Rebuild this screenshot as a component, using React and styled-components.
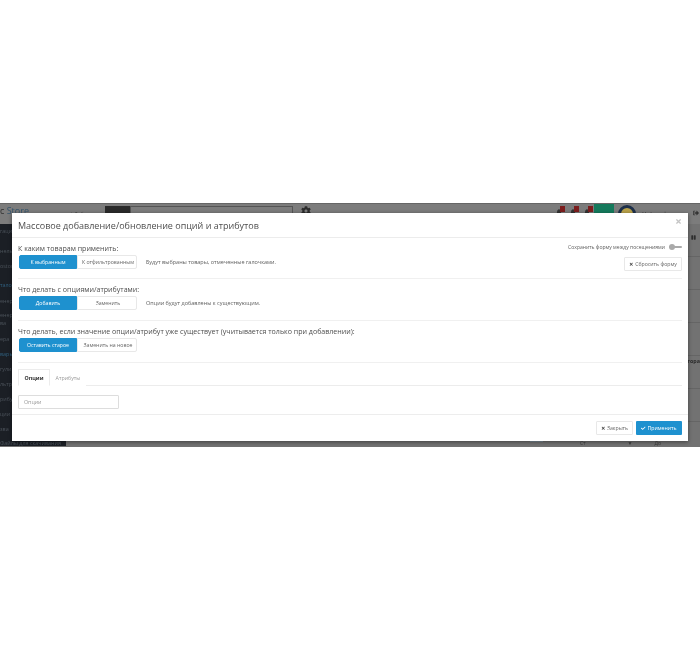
import React from "react";
import styled, { createGlobalStyle } from "styled-components";
import { FaTimes, FaCheck, FaPause, FaCog, FaSignOutAlt, FaBell } from "react-icons/fa";

const Global = createGlobalStyle`
  html, body { margin: 0; padding: 0; background: #fff; }
  body { font-family: "Open Sans", "Liberation Sans", sans-serif; color: #666; }
  * { box-sizing: border-box; }
`;

const Page = styled.div`
  width: 700px;
  height: 650px;
  padding-top: 203px;
  overflow: hidden;
`;

const Stage = styled.div`
  position: relative;
  height: 244px;
  background: #727272;
  overflow: hidden;
  filter: blur(0.42px);
`;

const BackHeader = styled.div`
  height: 21px;
  display: flex;
  align-items: flex-start;
  padding-top: 2px;
  background: #7c7c7c;
  border-top: 1px solid #666;
`;

const Brand = styled.div`
  width: 70px;
  font-size: 9px;
  line-height: 10px;
  color: #2f2f2f;
  span { color: #34546c; }
`;

const BackLink = styled.div`
  width: 35px;
  padding-top: 5px;
  font-size: 5px;
  line-height: 6px;
  color: #3d3d3d;
`;

const SearchAddon = styled.div`
  width: 25px;
  height: 12px;
  background: #2a2a2a;
`;

const SearchBox = styled.div`
  width: 163px;
  height: 10px;
  border: 1px solid #555;
  background: #7c7c7c;
`;

const GearSlot = styled.div`
  margin-left: 8px;
  display: flex;
  color: #2c2c2c;
  font-size: 10px;
`;

const HeaderRight = styled.div`
  margin-left: auto;
  display: flex;
  align-items: flex-start;
  width: 144px;
`;

const BellSlot = styled.div`
  position: relative;
  width: ${(p) => p.$w}px;
  height: 10px;
  padding: 3px 0 0 0;
  display: flex;
  color: #333;
  font-size: 6px;
  &::after {
    content: "";
    position: absolute;
    left: 4px;
    top: 0;
    width: 5px;
    height: 6px;
    background: #7c1d1d;
  }
`;

const GreenTile = styled.div`
  width: 20px;
  height: 12px;
  margin-top: -2px;
  background: #157a5c;
`;

const Avatar = styled.div`
  width: 18px;
  height: 18px;
  margin: -1px 6px 0 4px;
  border-radius: 50%;
  border: 3px solid #1d2f4a;
  background: #b9a24a;
`;

const UserName = styled.div`
  width: 38px;
  padding-top: 5px;
  font-size: 5px;
  line-height: 6px;
  color: #454545;
  white-space: nowrap;
`;

const ExitSlot = styled.div`
  margin-left: 13px;
  padding-top: 4px;
  display: flex;
  color: #333;
  font-size: 6px;
`;

const BackBody = styled.div`
  display: flex;
  height: 222px;
`;

const Sidebar = styled.div`
  width: 66px;
  background: #1b1f25;
`;

const SideItem = styled.div`
  height: ${(p) => p.$h}px;
  display: flex;
  align-items: flex-end;
  font-size: 5.4px;
  line-height: 6px;
  color: ${(p) => (p.$on ? "#2f5f7e" : "#4b525a")};
  white-space: nowrap;
`;

const BackTable = styled.div`
  flex: 1;
  display: flex;
  flex-direction: column;
  background: repeating-linear-gradient(180deg, transparent 0 32px, #656565 32px 33px), #727272;
`;

const PauseRow = styled.div`
  height: 26px;
  display: flex;
  align-items: center;
  justify-content: flex-end;
  padding-right: 4px;
  color: #2e2e2e;
  font-size: 5px;
`;

const GridCells = styled.div`
  flex: 1;
  display: flex;
  justify-content: flex-end;
  align-items: flex-start;
  padding-top: 107px;
  font-size: 5.4px;
  font-weight: 700;
  color: #2b2b2b;
`;

const BottomStrip = styled.div`
  flex: none;
  height: 6px;
  display: flex;
  font-size: 5px;
  line-height: 6px;
  color: #3a3a3a;
`;

const StripBlue = styled.div`
  width: 13px;
  height: 2px;
  margin-left: 464px;
  background: #7d8b96;
`;

const StripLabel = styled.div`
  margin-left: ${(p) => p.$ml}px;
`;

const Modal = styled.div`
  position: absolute;
  left: 12px;
  top: 10px;
  width: 676px;
  height: 228px;
  background: #fff;
  box-shadow: 0 1px 4px rgba(0, 0, 0, 0.45);
  display: flex;
  flex-direction: column;
`;

const ModalHeader = styled.div`
  position: relative;
  height: 25px;
  flex: none;
  padding: 5px 6px 0;
  border-bottom: 1px solid #ececec;
`;

const Title = styled.h4`
  margin: 0;
  font-size: 9px;
  line-height: 15px;
  font-weight: 400;
  color: #4d4d4d;
`;

const CloseMark = styled.span`
  position: absolute;
  right: 6px;
  top: 5px;
  display: flex;
  font-size: 7px;
  color: #c4c4c4;
`;

const ModalBody = styled.div`
  flex: 1;
  padding: 0 6px;
`;

const Section = styled.div`
  height: ${(p) => p.$h}px;
  display: flex;
  justify-content: space-between;
  border-bottom: 1px solid #f0f0f0;
`;

const Field = styled.div`
  padding-top: 5px;
`;

const Label = styled.div`
  font-size: 7.07px;
  line-height: 10px;
  color: #4d4d4d;
`;

const ControlRow = styled.div`
  display: flex;
  align-items: center;
  margin-top: 2px;
  margin-left: 1px;
`;

const Segmented = styled.div`
  display: flex;
  width: 118px;
  height: 14px;
`;

const Seg = styled.div`
  display: flex;
  align-items: center;
  justify-content: center;
  width: ${(p) => (p.$on ? 58 : 60)}px;
  padding-left: ${(p) => (p.$on ? 0 : 2)}px;
  font-size: 5.2px;
  white-space: nowrap;
  border: 1px solid ${(p) => (p.$on ? "#1e91cf" : "#e8e8e8")};
  border-radius: ${(p) => (p.$on ? "2px 0 0 2px" : "0 2px 2px 0")};
  background: ${(p) => (p.$on ? "#1e91cf" : "#fff")};
  color: ${(p) => (p.$on ? "#fff" : "#666")};
`;

const Hint = styled.span`
  margin-left: 9px;
  font-size: 5.5px;
  color: #5c5c5c;
`;

const Side = styled.div`
  display: flex;
  flex-direction: column;
  align-items: flex-end;
  padding-top: 5px;
`;

const SaveRow = styled.div`
  display: flex;
  align-items: center;
  gap: 4px;
  height: 8px;
  font-size: 5.05px;
  color: #5c5c5c;
`;

const Toggle = styled.div`
  position: relative;
  width: 13px;
  height: 2px;
  background: #aaa;
  border-radius: 1px;
  &::before {
    content: "";
    position: absolute;
    left: 0;
    top: -2px;
    width: 6px;
    height: 6px;
    border-radius: 50%;
    background: #aaa;
  }
`;

const OutlineButton = styled.div`
  display: flex;
  align-items: center;
  justify-content: center;
  gap: 1.5px;
  height: 14px;
  width: ${(p) => p.$w}px;
  border: 1px solid #e8e8e8;
  border-radius: 1px;
  background: #fff;
  font-size: 5.2px;
  color: #666;
  svg { color: #444; font-size: 4.5px; }
`;

const ResetButton = styled(OutlineButton)`
  margin-top: 6px;
`;

const Tabs = styled.div`
  display: flex;
  height: 23px;
  border-bottom: 1px solid #ececec;
`;

const Tab = styled.div`
  display: flex;
  align-items: center;
  justify-content: center;
  width: ${(p) => p.$w}px;
  height: 17px;
  margin-top: 6px;
  font-size: 5.3px;
  font-weight: ${(p) => (p.$on ? 700 : 400)};
  color: ${(p) => (p.$on ? "#333" : "#999")};
  background: #fff;
  border: 1px solid ${(p) => (p.$on ? "#ececec" : "transparent")};
  border-bottom-color: ${(p) => (p.$on ? "#fff" : "transparent")};
`;

const OptionInput = styled.input`
  display: block;
  width: 101px;
  height: 14px;
  margin-top: 9px;
  padding: 0 5px;
  border: 1px solid #ddd;
  border-radius: 1px;
  font: 400 5.3px "Open Sans", sans-serif;
  &::placeholder { color: #999; opacity: 1; }
`;

const ModalFooter = styled.div`
  flex: none;
  height: 27px;
  display: flex;
  justify-content: flex-end;
  gap: 3px;
  padding: 6px 6px 0;
  border-top: 1px solid #ededed;
`;

const ApplyButton = styled.div`
  display: flex;
  align-items: center;
  justify-content: center;
  gap: 1.5px;
  width: 46px;
  height: 14px;
  background: #1e91cf;
  border-radius: 1px;
  font-size: 5.2px;
  color: #fff;
  svg { font-size: 4.5px; }
`;

const sideItems = [
  { t: "гации", h: 10 },
  { t: "нель", h: 20 },
  { t: "oston", h: 15 },
  { t: "талог", h: 19, on: true },
  { t: "енеро", h: 16 },
  { t: "енера", h: 14 },
  { t: "ва", h: 8 },
  { t: "ера", h: 16 },
  { t: "вары", h: 15, on: true },
  { t: "гулир", h: 15 },
  { t: "льтр", h: 15 },
  { t: "рибут", h: 15 },
  { t: "ции", h: 15 },
  { t: "зва", h: 15 },
  { t: "Файлы для скачивания", h: 14 },
];

export default function App() {
  return (
    <Page>
      <Global />
      <Stage>
        <BackHeader>
          <Brand>c <span>Store</span></Brand>
          <BackLink>+ Добавить</BackLink>
          <SearchAddon />
          <SearchBox />
          <GearSlot><FaCog /></GearSlot>
          <HeaderRight>
            <BellSlot $w={14}><FaBell /></BellSlot>
            <BellSlot $w={14}><FaBell /></BellSlot>
            <BellSlot $w={10}><FaBell /></BellSlot>
            <GreenTile />
            <Avatar />
            <UserName>Мой профиль ▾</UserName>
            <ExitSlot><FaSignOutAlt /></ExitSlot>
          </HeaderRight>
        </BackHeader>
        <BackBody>
          <Sidebar>
            {sideItems.map((item) => (
              <SideItem key={item.t} $h={item.h} $on={item.on}>{item.t}</SideItem>
            ))}
          </Sidebar>
          <BackTable>
            <PauseRow><FaPause /></PauseRow>
            <GridCells>гора</GridCells>
            <BottomStrip>
              <StripBlue />
              <StripLabel $ml={37}>Ст</StripLabel>
              <StripLabel $ml={42}>▼</StripLabel>
              <StripLabel $ml={22}>До</StripLabel>
            </BottomStrip>
          </BackTable>
        </BackBody>
        <Modal>
          <ModalHeader>
            <Title>Массовое добавление/обновление опций и атрибутов</Title>
            <CloseMark><FaTimes /></CloseMark>
          </ModalHeader>
          <ModalBody>
            <Section $h={41}>
              <Field>
                <Label>К каким товарам применить:</Label>
                <ControlRow>
                  <Segmented>
                    <Seg $on>К выбранным</Seg>
                    <Seg>К отфильтрованным</Seg>
                  </Segmented>
                  <Hint>Будут выбраны товары, отмеченные галочками.</Hint>
                </ControlRow>
              </Field>
              <Side>
                <SaveRow>
                  Сохранить форму между посещениями
                  <Toggle />
                </SaveRow>
                <ResetButton $w={58}>
                  <FaTimes /> Сбросить форму
                </ResetButton>
              </Side>
            </Section>
            <Section $h={42}>
              <Field>
                <Label>Что делать с опциями/атрибутами:</Label>
                <ControlRow>
                  <Segmented>
                    <Seg $on>Добавить</Seg>
                    <Seg>Заменить</Seg>
                  </Segmented>
                  <Hint>Опции будут добавлены к существующим.</Hint>
                </ControlRow>
              </Field>
            </Section>
            <Section $h={42}>
              <Field>
                <Label>Что делать, если значение опции/атрибут уже существует (учитывается только при добавлении):</Label>
                <ControlRow>
                  <Segmented>
                    <Seg $on>Оставить старое</Seg>
                    <Seg>Заменить на новое</Seg>
                  </Segmented>
                </ControlRow>
              </Field>
            </Section>
            <Tabs>
              <Tab $on $w={32}>Опции</Tab>
              <Tab $w={36}>Атрибуты</Tab>
            </Tabs>
            <OptionInput placeholder="Опции" />
          </ModalBody>
          <ModalFooter>
            <OutlineButton $w={37}>
              <FaTimes /> Закрыть
            </OutlineButton>
            <ApplyButton>
              <FaCheck /> Применить
            </ApplyButton>
          </ModalFooter>
        </Modal>
      </Stage>
    </Page>
  );
}
